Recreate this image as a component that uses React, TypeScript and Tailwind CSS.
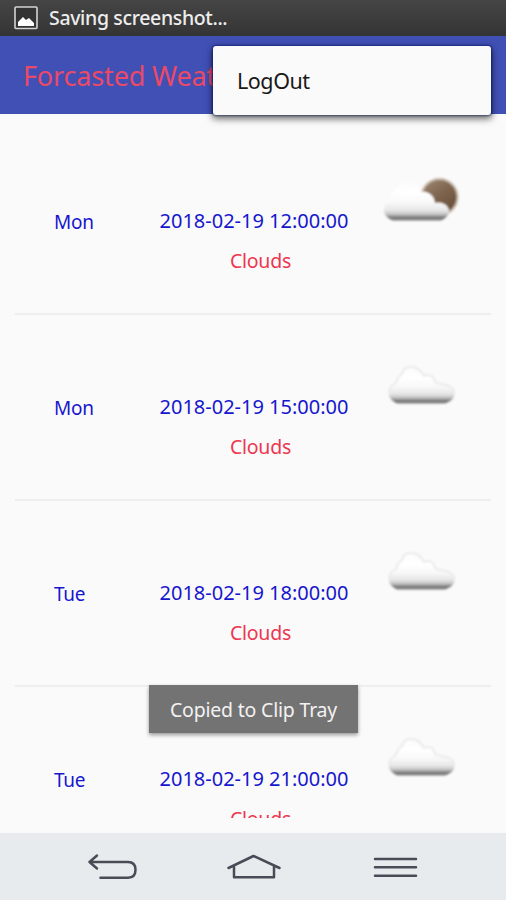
type Forecast = {
    day: string;
    date: string;
    condition: string;
    icon: 'partly' | 'cloud';
};

const forecasts: Forecast[] = [
    { day: 'Mon', date: '2018-02-19 12:00:00', condition: 'Clouds', icon: 'partly' },
    { day: 'Mon', date: '2018-02-19 15:00:00', condition: 'Clouds', icon: 'cloud' },
    { day: 'Tue', date: '2018-02-19 18:00:00', condition: 'Clouds', icon: 'cloud' },
    { day: 'Tue', date: '2018-02-19 21:00:00', condition: 'Clouds', icon: 'cloud' },
];

const WeatherIcon = ({ type, id }: { type: Forecast['icon']; id: string }) => (
    <svg viewBox="0 0 100 70" className="w-[100px] h-[70px]">
        <defs>
            <linearGradient id={`${id}-cloud`} x1="0" y1="0" x2="0" y2="1">
                <stop offset="0" stopColor="#fbfbfb" />
                <stop offset="0.3" stopColor="#ffffff" />
                <stop offset="0.55" stopColor="#f8f8f8" />
                <stop offset="0.74" stopColor="#e6e6e6" />
                <stop offset="0.84" stopColor="#c4c4c4" />
                <stop offset="0.93" stopColor="#747474" />
                <stop offset="1" stopColor="#868686" />
            </linearGradient>
            <linearGradient id={`${id}-moon`} x1="0" y1="0" x2="0.7" y2="1">
                <stop offset="0" stopColor="#a18b79" />
                <stop offset="0.5" stopColor="#80664f" />
                <stop offset="1" stopColor="#674d38" />
            </linearGradient>
            <filter id={`${id}-soft`} x="-10%" y="-10%" width="120%" height="120%">
                <feGaussianBlur stdDeviation="0.8" />
            </filter>
        </defs>
        {type === 'partly' ? (
            <g filter={`url(#${id}-soft)`}>
                <circle cx="69.5" cy="32" r="18" fill={`url(#${id}-moon)`} stroke="#cabbad" strokeWidth="2" />
                <path
                    d="M23 55.5 C18 54 13 49 14 44 C14 40 16 37 19 35 C19 30 22 27 25 26 C27 20 31 17 37 17 C44 16 49 20 51 27 C58 26 64 30 65 38 C70 36 78 39 79 45 C80 50 75 54 71 55.5 Z"
                    fill={`url(#${id}-cloud)`}
                />
            </g>
        ) : (
            <g filter={`url(#${id}-soft)`}>
                <path
                    d="M27 52.5 C22 50 18 46 19 42 C19 37 22 34 26 32 C27 28 29 25 32 23 C33 18 37 15 42 16 C48 16 51 20 54 25 C58 23 64 24 65 31 C70 34 75 33 79 35 C84 37 86 41 84 45 C83 49 79 51 75 52.5 Z"
                    fill={`url(#${id}-cloud)`}
                />
                <path
                    d="M19 42 C19 37 22 34 26 32 C27 28 29 25 32 23 C33 18 37 15 42 16 C48 16 51 20 54 25 C58 23 64 24 65 31 C70 34 75 33 79 35 C83 37 85 40 84 43"
                    fill="none"
                    stroke="#e9e9e9"
                    strokeWidth="1.8"
                />
            </g>
        )}
    </svg>
);

const StatusBar = () => (
    <div className="flex h-9 shrink-0 items-center bg-linear-to-b from-[#454545] to-[#343434] pl-3.5">
        <svg viewBox="0 0 24 24" className="size-6">
            <rect x="1" y="1" width="22" height="21.5" rx="1" fill="#333333" stroke="#d4d4d4" strokeWidth="1.6" />
            <path d="M4 20 V16 L9 11 L12 14 L15 12 L20 17 V20 Z" fill="#ffffff" />
        </svg>
        <span className="ml-[11px] text-[19.5px] leading-none font-medium tracking-[-0.35px] text-[#ededed]">
            Saving screenshot...
        </span>
    </div>
);

const ForecastRow = ({ item, id }: { item: Forecast; id: string }) => (
    <li className="flex h-[186px] shrink-0 border-b-2 border-[#eeeeee]">
        <div className="w-[109px] pt-[79px] pl-[39px] text-[19px] leading-7 tracking-[-0.3px] text-[#1616ce]">
            {item.day}
        </div>
        <div className="w-[260px] pt-[78px] text-center text-[20px] leading-7">
            <p className="whitespace-nowrap text-[#1616ce]">{item.date}</p>
            <p className="mt-3 pl-[13px] text-[19.5px] tracking-[-0.25px] text-[#ee3650]">{item.condition}</p>
        </div>
        <div className="-ml-[14px] pt-9">
            <WeatherIcon type={item.icon} id={id} />
        </div>
    </li>
);

const NavBar = () => (
    <nav className="flex h-[67px] shrink-0 items-center justify-center bg-[#e8ebee]">
        <svg viewBox="0 0 506 67" className="h-full w-full" fill="none" stroke="#484c57" strokeWidth="2.5" strokeLinejoin="round" strokeLinecap="round">
            <path d="M97 22.5 L89.5 29 L97 35.5 M89.5 29 H128 Q135.5 29 135.5 36.8 Q135.5 44.7 128 44.7 H100.5" />
            <path d="M228.5 35 L253.5 23 L279.5 35 M234 33 V44.3 H274 V33" />
            <path d="M375 26 H416 M375 34.3 H416 M375 42.7 H416" />
        </svg>
    </nav>
);

export default function App() {
    return (
        <div className="relative flex h-[900px] w-[506px] flex-col overflow-hidden bg-[#fafafa] font-['Noto_Sans',sans-serif]">
            <StatusBar />

            <header className="flex h-[78px] shrink-0 items-center bg-[#4050b5] pt-0.5 pl-[23px]">
                <h1 className="text-[27px] tracking-[-0.15px] whitespace-nowrap text-[#ea4968]">Forcasted Weather</h1>
            </header>

            <main className="h-[704px] shrink-0 overflow-hidden px-[15px] pt-[15px]">
                <ul className="flex h-full flex-col">
                    {forecasts.map((item, i) => (
                        <ForecastRow key={item.date} item={item} id={`row-${i}`} />
                    ))}
                </ul>
            </main>
            <div className="h-[15px] shrink-0" />

            <NavBar />

            {/* Overflow menu */}
            <div className="absolute top-[46px] left-[213px] flex h-[69px] w-[278px] items-center rounded-[3px] bg-[#fafafa] pt-px pl-6 text-[21.5px] tracking-[-0.45px] text-[#181818] shadow-[0_3px_7px_1px_rgba(0,0,0,0.55),0_0_2px_1px_rgba(0,20,120,0.5)]">
                LogOut
            </div>

            {/* Toast */}
            <div className="absolute top-[685px] left-[149px] flex h-12 w-[209px] items-center justify-center bg-[#737373] pt-0.5 text-[19.5px] tracking-[-0.2px] whitespace-nowrap text-[#f2f2f2] shadow-[0_2px_4px_rgba(0,0,0,0.4)]">
                Copied to Clip Tray
            </div>
        </div>
    );
}
